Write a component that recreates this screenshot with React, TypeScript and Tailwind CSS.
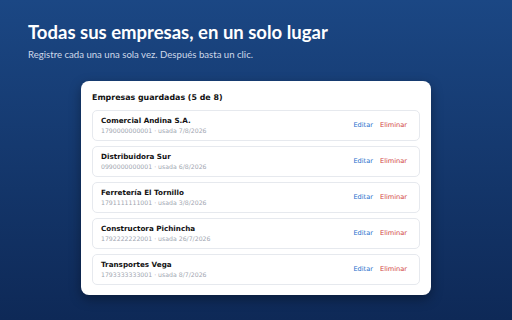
const empresas = [
  { nombre: "Comercial Andina S.A.", ruc: "1790000000001", usada: "7/8/2026" },
  { nombre: "Distribuidora Sur", ruc: "0990000000001", usada: "6/8/2026" },
  { nombre: "Ferretería El Tornillo", ruc: "1791111111001", usada: "3/8/2026" },
  { nombre: "Constructora Pichincha", ruc: "1792222222001", usada: "26/7/2026" },
  { nombre: "Transportes Vega", ruc: "1793333333001", usada: "8/7/2026" },
]

export default function App() {
  return (
    <div className="w-[512px] h-[320px] overflow-hidden bg-gradient-to-b from-[#1b4784] to-[#0e2957] font-['DejaVu_Sans',sans-serif]">
      <div className="px-[28px] pt-[20px] font-['Lato',sans-serif]">
        <h1 className="text-[18.5px] leading-[24px] font-bold text-white">Todas sus empresas, en un solo lugar</h1>
        <p className="mt-[4px] text-[9.6px] leading-[13px] text-[#cfd9ea]">Registre cada una una sola vez. Después basta un clic.</p>
      </div>

      <div className="ml-[81px] mt-[20px] w-[350px] rounded-[8px] bg-white px-[11px] pt-[10px] pb-[10px] shadow-[0_4px_12px_rgba(0,0,0,0.35)]">
        <div className="text-[7.9px] leading-[14px] font-bold text-[#111]">Empresas guardadas (5 de 8)</div>
        <div className="mt-[5px] flex flex-col gap-[5px]">
          {empresas.map((e) => (
            <div
              key={e.ruc}
              className="flex h-[31px] items-center justify-between rounded-[5px] border border-[#e6e9ee] pl-[8px] pr-[12px]"
            >
              <div className="flex flex-col">
                <span className="text-[7.2px] leading-[10px] font-bold text-[#111]">{e.nombre}</span>
                <span className="text-[6.2px] leading-[9px] text-[#a0a6b0]">
                  {e.ruc} · usada {e.usada}
                </span>
              </div>
              <div className="flex gap-[7px] text-[6.6px]">
                <span className="text-[#1f6fcc]">Editar</span>
                <span className="text-[#d0403c]">Eliminar</span>
              </div>
            </div>
          ))}
        </div>
      </div>
    </div>
  )
}
